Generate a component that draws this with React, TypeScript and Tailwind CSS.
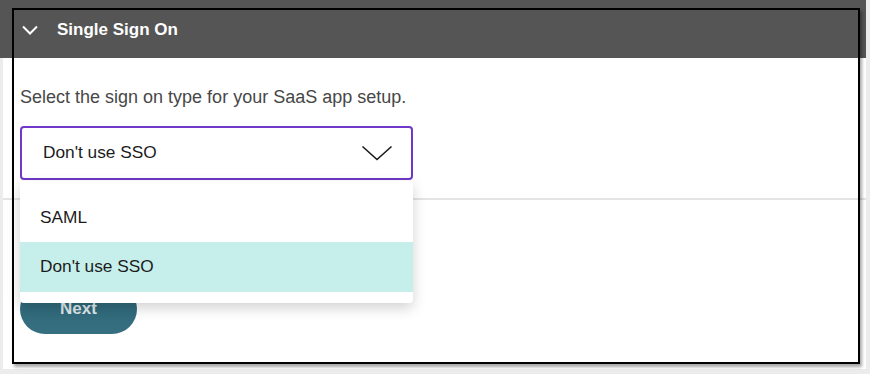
export default function App() {
  return (
    <div className="relative h-[374px] w-[870px] overflow-hidden bg-[#ececec] font-['Liberation_Sans',Arial,sans-serif]">
      <div className="flex h-[369px] w-[866px] flex-col">
        <div className="flex h-[58px] shrink-0 items-center bg-[#555555] pl-[22px]">
          <svg width="16" height="10" viewBox="0 0 16 10" className="mt-[1px]">
            <path d="M1 1.5 L8 8.5 L15 1.5" fill="none" stroke="#ffffff" strokeWidth="2" />
          </svg>
          <span className="ml-[19px] mt-[1px] text-[17px] font-bold text-white">Single Sign On</span>
        </div>

        <div className="flex flex-1 flex-col ml-[3px] bg-white">
          <p className="mt-[29px] pl-[17px] text-[18px] leading-[20px] text-[#474747]">
            Select the sign on type for your SaaS app setup.
          </p>

          <div className="relative ml-[17px] mt-[19px] w-[393px]">
            <div className="flex h-[54px] items-center justify-between rounded-[4px] border-2 border-[#6f38c8] pl-[21px] pr-[18px]">
              <span className="text-[17.3px] text-[#1c1c1c]">Don&apos;t use SSO</span>
              <svg width="32" height="16" viewBox="0 0 32 16">
                <path d="M1.5 1.5 L16 14.5 L30.5 1.5" fill="none" stroke="#1a1a1a" strokeWidth="1.6" />
              </svg>
            </div>

            <div className="absolute left-0 top-[55px] z-10 w-[393px] rounded-b-[4px] bg-white py-[11px] shadow-[0_5px_14px_rgba(0,0,0,0.18)]">
              <div className="flex h-[50px] items-center pl-[20px] pt-[2px] text-[17.3px] text-[#1c1c1c]">SAML</div>
              <div className="flex h-[50px] items-center bg-[#c6efeb] pl-[20px] text-[17.3px] text-[#1c1c1c]">
                Don&apos;t use SSO
              </div>
            </div>
          </div>

          <div className="mt-[18px] h-[2px] bg-[#e4e4e4]" />

          <button className="ml-[17px] mt-[84px] h-[50px] w-[117px] rounded-full bg-gradient-to-b from-[#2d6678] to-[#356f80] text-[17px] font-bold text-[#dfe9ec]">
            Next
          </button>
        </div>
      </div>

      <div className="pointer-events-none absolute left-[12px] top-[8px] h-[356px] w-[848px] border-2 border-black shadow-[2px_3px_3px_rgba(0,0,0,0.35)]" />
    </div>
  );
}
